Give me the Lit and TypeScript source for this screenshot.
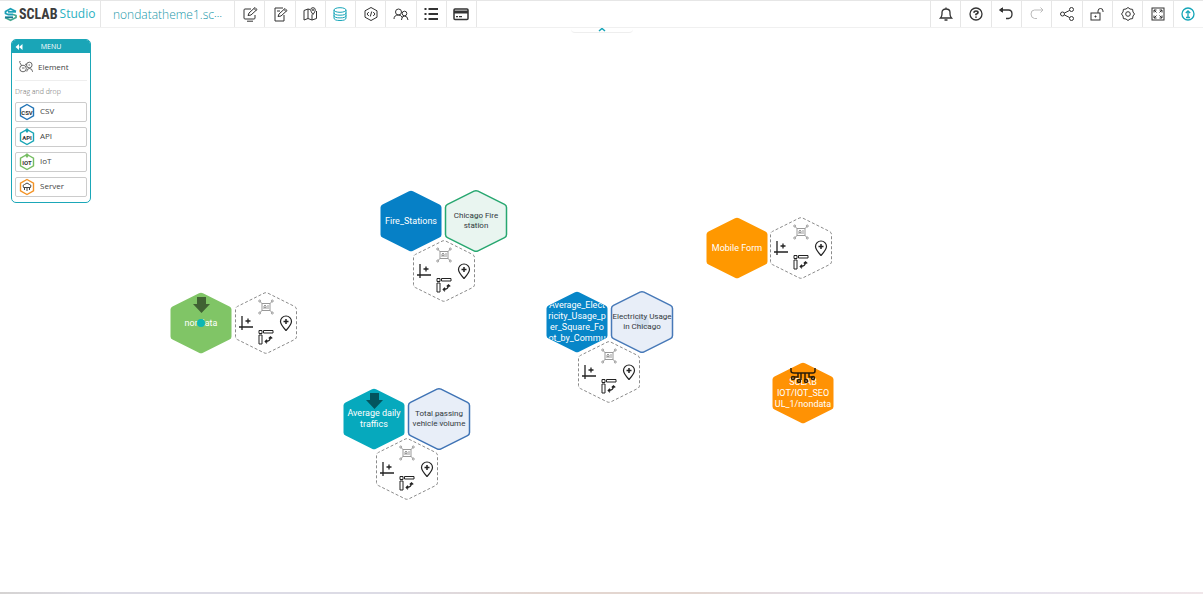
import { LitElement, html, css, svg, nothing } from "lit";
import { customElement, property } from "lit/decorators.js";

const HEX = "M34 2.2 L60.5 15.4 Q62.5 16.4 62.5 18.6 V45.4 Q62.5 47.6 60.5 48.6 L34 61.8 Q32 62.8 30 61.8 L3.5 48.6 Q1.5 47.6 1.5 45.4 V18.6 Q1.5 16.4 3.5 15.4 L30 2.2 Q32 1.2 34 2.2Z";

const ICONS: Record<string, unknown> = {
  monitorEdit: svg`<path d="M9 3H3Q2 3 2 4V12Q2 13 3 13H12Q13 13 13 12V9M5 15.2H11M6 9.5L7 7L13 1.5L15 3.5L9 9ZM12 2.5L14 4.5"/>`,
  noteEdit: svg`<path d="M11 2H3V15H12V9M6 10.5L7 8L13 2.500L15 4.500L9 10ZM12 3.500L14 5.500M5 5H8"/>`,
  map: svg`<path d="M8 3.500L6 3L2 4.500V14L6 12.500L10 14L14.500 12.500V5M6 3V12.500M10 8.500V14"/><path d="M11 8.500Q8.700 5.500 8.700 4A2.300 2.300 0 0 1 13.300 4Q13.300 5.500 11 8.500Z"/><circle cx="11" cy="4" r=".6"/>`,
  data: svg`<ellipse cx="8" cy="4" rx="6" ry="2.300"/><path d="M2 4V12Q2 14.500 8 14.500T14 12V4M2 6.700Q2 9.200 8 9.200T14 6.700M2 9.400Q2 11.900 8 11.900T14 9.400"/>`,
  code: svg`<path d="M8 1.500L14 4.800V11.200L8 14.500L2 11.200V4.800ZM5.800 6L4 8L5.800 10M10.200 6L12 8L10.200 10M8.700 5.500L7.300 10.500"/>`,
  users: svg`<circle cx="5.500" cy="6" r="3"/><path d="M1 13Q1 9 5.500 9Q8 9 9.500 11.500"/><circle cx="11.500" cy="7.500" r="2.300"/><path d="M8.500 14Q8.500 10 11.500 10T15 14"/>`,
  list: svg`<path stroke-width="2" d="M1.500 3H3.500M5.500 3H15M1.500 8H3.500M5.500 8H15M1.500 13H3.500M5.500 13H15"/>`,
  card: svg`<rect x="1" y="3" width="14" height="10.500" rx="1" stroke-width="1.500"/><path stroke-width="3" d="M1 6H15"/><path stroke-width="1.300" d="M3 10.700H5M6 10.700H9"/>`,
  bell: svg`<path stroke-width="1.300" d="M2.500 12H13.500Q12 10.500 12 8V6.500Q12 3 8 3T4 6.500V8Q4 10.500 2.500 12ZM8 1.500V3M6.500 14H9.500"/>`,
  help: svg`<circle cx="8" cy="8" r="6" stroke-width="1.300"/><path stroke-width="1.700" d="M6 6.700Q6 5 8 5T10 6.500Q10 7.500 8 8.300V9.300M8 10.400V11.800"/>`,
  undo: svg`<path stroke-width="1.300" d="M2 4H10.500Q14 4 14 8T10.500 12.500H8"/><path fill="currentColor" d="M1.500 4L4.500 1.800V6.200Z"/>`,
  redo: svg`<path d="M14 4H5.500Q2 4 2 8T5.500 12.500H8M11.500 1.500L14 4L11.500 6.500"/>`,
  share: svg`<circle cx="3.500" cy="8" r="2"/><circle cx="12.500" cy="3.500" r="2"/><circle cx="12.500" cy="12.500" r="2"/><path d="M5.300 7.100L10.700 4.400M5.300 8.900L10.700 11.600"/>`,
  lock: svg`<rect x="2" y="7" width="9" height="7"/><path d="M9 7V5Q9 2.500 11.500 2.500T14 5V6M6.500 9.500V11.500M5.500 10.500H7.500"/>`,
  gear: svg`<path d="M8 1.500L10 3L12.600 3.400L13 6L14.500 8L13 10L12.600 12.600L10 13L8 14.500L6 13L3.400 12.600L3 10L1.500 8L3 6L3.400 3.400L6 3Z"/><circle cx="8" cy="8" r="2.300"/>`,
  expand: svg`<rect x="2" y="2" width="12" height="12"/><path d="M4 6.500V4H6.500M4 4L6.500 6.500M9.500 4H12V6.500M12 4L9.500 6.500M4 9.500V12H6.500M4 12L6.500 9.500M12 9.500V12H9.500M12 12L9.500 9.500"/>`,
  upload: svg`<circle cx="8" cy="8" r="6" stroke-width="1.300"/><path stroke-width="1.300" d="M8 11V5M5.800 7L8 4.800L10.200 7M6 11.500H10"/>`,
  element: svg`<g stroke-width=".8"><circle cx="5" cy="9.500" r="3.300"/><circle cx="11.300" cy="6" r="2.800"/><path d="M8.800 12.500Q8.800 9.500 11.500 9.500T14.500 12.500V13M1.800 3.500L3.500 6.500M7 5.500L8.500 5M1 3L2.500 2.500M4 9H6.500M10.500 6H12"/></g>`,
  ai: svg`<rect x="4" y="4.500" width="8" height="7"/><path d="M4 4.500L2 2.500M12 4.500L14 2.500M4 11.500L2 13.500M12 11.500L14 13.500M6 10V7L7 6L8 7V10M6 8.500H8M10 6V10"/><circle cx="1.700" cy="2" r="1"/><circle cx="14.300" cy="2" r="1"/><circle cx="1.700" cy="14" r="1"/><circle cx="14.300" cy="14" r="1"/>`,
  axis: svg`<path stroke-width="1.300" d="M4 1V15M1 12H15M7.500 6H12.500M10 3.500V8.500"/>`,
  pin: svg`<path stroke-width="1.200" d="M8 15.500Q2.500 9.500 2.500 6.500A5.500 5.500 0 0 1 13.500 6.500Q13.500 9.500 8 15.500Z"/><path stroke-width="1.500" d="M5.500 6.500H10.500M8 4V9"/>`,
  ruler: svg`<path d="M1 1.500H4V4.500H1ZM5.500 1.500H15V4H5.500ZM1 6H4V15H1Z"/><path stroke-width="1.300" d="M7.500 12.500Q12.500 12.500 12.500 8M9 10.800L7.300 12.500L9 14.200M10.800 9.500L12.500 7.800L14.200 9.500"/>`,
};

const icon = (name: string) => html`<svg class="icon" viewBox="0 0 16 16" aria-hidden="true">${ICONS[name]}</svg>`;

interface Item { kind: "solid" | "outline" | "tools"; x: number; y: number; color?: string; fill?: string; lines?: string[]; mark?: "arrow" | "iot"; dot?: boolean }

const ITEMS: Item[] = [
  { kind: "solid", x: 411, y: 221, color: "#0680c6", lines: ["Fire_Stations"] },
  { kind: "outline", x: 476, y: 221, color: "#27a770", fill: "#e9f5f0", lines: ["Chicago Fire", "station"] },
  { kind: "tools", x: 444, y: 271 },
  { kind: "solid", x: 201, y: 323, color: "#80c566", lines: ["nondata"], mark: "arrow", dot: true },
  { kind: "tools", x: 266, y: 323 },
  { kind: "solid", x: 577, y: 322, color: "#0786c8", lines: ["Average_Elect", "ricity_Usage_p", "er_Square_Fo", "ot_by_Commu"] },
  { kind: "outline", x: 642, y: 322, color: "#4779b8", fill: "#e8eef8", lines: ["Electricity Usage", "in Chicago"] },
  { kind: "tools", x: 609, y: 372 },
  { kind: "solid", x: 374, y: 419, color: "#06a9bd", lines: ["Average daily", "traffics"], mark: "arrow" },
  { kind: "outline", x: 439, y: 419, color: "#3f73b5", fill: "#e8eef8", lines: ["Total passing", "vehicle volume"] },
  { kind: "tools", x: 407, y: 469 },
  { kind: "solid", x: 737, y: 248, color: "#ff9800", lines: ["Mobile Form"] },
  { kind: "tools", x: 801, y: 248 },
  { kind: "solid", x: 803, y: 393, color: "#ff9204", lines: ["SCLAB", "IOT/IOT_SEO", "UL_1/nondata"], mark: "iot" },
];

const shared = css`
  *, *::before { box-sizing: border-box; }
  button { font: inherit; color: inherit; border: 0; padding: 0; margin: 0; background: none; cursor: pointer; }
  .icon { display: block; width: 16px; height: 16px; fill: none; stroke: currentColor; stroke-width: 1; }
`;

@customElement("hex-node")
export class HexNode extends LitElement {
  static styles = [shared, css`
    :host { display: block; width: 64px; height: 64px; }
    .hex { position: relative; display: grid; width: 64px; height: 64px; place-items: center; }
    .shape { position: absolute; inset: 0; width: 64px; height: 64px; }
    .label { position: relative; text-align: center; white-space: nowrap; font-family: Roboto, sans-serif; }
    .clip { position: absolute; inset: 0; display: grid; place-items: center; place-content: center; clip-path: polygon(50% 2%, 97% 26%, 97% 74%, 50% 98%, 3% 74%, 3% 26%); }
    .solid { color: #fff; font-size: 9px; line-height: 11px; }
    .outline { color: #33393d; font-size: 8px; line-height: 10px; }
    .line { display: block; }
    .tools { display: grid; grid-template: 18px 14px 14px / 20px 20px 20px; place-items: center; place-content: start center; padding-top: 7px; color: #222; }
    .tools button { position: relative; }
    .ai { grid-area: 1 / 2; color: #999; }
    .axis { grid-area: 2 / 1; }
    .pin { grid-area: 2 / 3; }
    .ruler { grid-area: 3 / 2; }
  `];
  @property({ attribute: false }) item!: Item;

  render() {
    const i = this.item;
    if (i.kind === "tools") {
      return html`<div class="hex tools">
        <svg class="shape" viewBox="0 0 64 64" aria-hidden="true"><path d=${HEX} fill="#fff" stroke="#8b8b8b" stroke-dasharray="3 2"/></svg>
        <button class="ai" aria-label="AI">${icon("ai")}</button>
        <button class="axis" aria-label="Add chart">${icon("axis")}</button>
        <button class="pin" aria-label="Add place">${icon("pin")}</button>
        <button class="ruler" aria-label="Transform">${icon("ruler")}</button>
      </div>`;
    }
    const solid = i.kind === "solid";
    return html`<div class="hex">
      <svg class="shape" viewBox="0 0 64 64" aria-hidden="true">
        <path d=${HEX} fill=${solid ? i.color! : i.fill!} stroke=${solid ? "none" : i.color!} stroke-width="1.5"/>
        ${solid ? nothing : svg`<circle cx="32" cy="32" r="7" fill=${i.color!} opacity=".12"/>`}
        ${i.mark === "arrow" ? svg`<path d="M28 6H37V13H41L32.500 22L24 13H28Z" fill="#000" opacity=".5"/>` : nothing}
      </svg>
      <div class="clip"><div class="label ${i.kind}">${i.lines!.map((l) => html`<span class="line">${l}</span>`)}</div></div>
      ${i.mark === "iot" || i.dot ? html`<svg class="shape" viewBox="0 0 64 64" aria-hidden="true">
        ${i.dot ? svg`<circle cx="32" cy="32" r="4" fill="#0cb7b2"/>` : svg`<g fill="none" stroke="#2b1d08" stroke-width="1.500">
          <path d="M20 7V10Q20 12 23 12H42Q44 12 44 10V7M27 12V16H23M30 12V19M34 12V19M38 12V16H42"/>
          <circle cx="22" cy="17" r="1.500"/><circle cx="28" cy="20" r="1.500"/><circle cx="35" cy="20" r="1.500"/><circle cx="42" cy="17" r="1.500"/></g>`}
      </svg>` : nothing}
    </div>`;
  }
}

@customElement("app-root")
export class AppRoot extends LitElement {
  static styles = [shared, css`
    :host { display: flex; flex-direction: column; min-height: 100vh; background: #fff; color: #444; font-family: "Open Sans", sans-serif; }
    .bar { display: flex; height: 28px; border-top: 1px solid #e6e6e6; border-bottom: 1px solid #f0f0f0; }
    .logo { display: flex; align-items: center; gap: 2px; width: 100px; padding: 0 0 0 4px; text-decoration: none; color: #3c3c3c; }
    .mark { width: 13px; height: 15px; }
    .brand { font: 700 14px/20px "Roboto Condensed", "Open Sans Condensed", Roboto, sans-serif; }
    .studio { font-size: 12px; line-height: 20px; color: #2cb1c2; }
    .file { width: 134px; padding: 0 12px; border-left: 1px solid #e6e6e6; text-align: left; font-size: 12px; font-weight: 300; color: #1797a9; white-space: nowrap; }
    .more { font-size: 8px; }
    .group { display: grid; grid-auto-flow: column; grid-auto-columns: 1fr; }
    .left { width: 243px; border-right: 1px solid #e6e6e6; }
    .right { width: 273px; margin-left: auto; }
    .cell { display: grid; place-items: center; padding-bottom: 1px; border-left: 1px solid #e6e6e6; color: #333; }
    .active { color: #15a5b8; }
    .cell:disabled { color: #bbb; }
    .canvas { position: relative; flex: 1; overflow: hidden; }
    .toggle { position: absolute; top: -1px; left: 50%; width: 62px; height: 6px; transform: translateX(-50%); display: grid; place-items: center; background: #fff; border-bottom: 1px solid #eee; border-radius: 0 0 4px 4px; color: #15a5b8; }
    .chevron { width: 8px; height: 5px; fill: none; stroke: currentColor; stroke-width: 1.5; }
    .menu { position: absolute; left: 11px; top: 11px; width: 80px; border: 1px solid #1ba7b8; border-radius: 5px; overflow: hidden; background: #fff; }
    .head { display: grid; grid-template-columns: 14px 1fr 14px; align-items: center; width: 100%; height: 13px; background: #1aa5b7; color: #fff; font-size: 7px; line-height: 10px; text-align: center; }
    .back { width: 8px; height: 8px; margin-left: 3px; fill: currentColor; }
    .body { display: flex; flex-direction: column; padding: 0 3px 5px; }
    .element { display: flex; align-items: center; gap: 4px; height: 28px; padding-left: 3px; border-bottom: 1px solid #eee; font-size: 8px; }
    .hint { margin: 0; font-size: 7px; line-height: 21px; font-weight: 300; color: #666; }
    .sources { display: flex; flex-direction: column; gap: 5px; }
    .source { display: flex; align-items: center; gap: 5px; height: 20px; padding-left: 3px; border: 1px solid #ccc; border-radius: 2px; font-size: 8px; }
    .name { padding-bottom: 3px; }
    .badge { width: 16px; height: 18px; }
    .tag { font: 700 6px Roboto, sans-serif; fill: #333; text-anchor: middle; }
    .node { position: absolute; }
    .strip { height: 2px; background: linear-gradient(90deg, #d5d3d2, #dcdbe5 8%, #dcdbe5 32%, #e3d6d0 45%, #e3d6d0 58%, #e3dfec 70%, #e5e2ed 84%, #f0e6e9); }
  `];

  private source(name: string, color: string) {
    return html`<button class="source">
      <svg class="badge" viewBox="0 0 16 18" aria-hidden="true">
        <path d="M8 1.500L14.500 5.200V12.800L8 16.500L1.500 12.800V5.200Z" fill="none" stroke=${color} stroke-width="1.400"/>
        ${name === "Server"
          ? svg`<path d="M4.500 9.500Q3 7 5.500 6.500Q8 3.500 10.500 6.500Q13 7 11.500 9.500ZM5.500 9.500V12M8 9.500V13M10.500 9.500V12" fill="none" stroke="#444"/>`
          : svg`<text class="tag" x="8" y="11.500">${name.toUpperCase()}</text>`}
        ${name === "API" || name === "IoT" ? svg`<path d="M8 0L10 2.500L8 5L6 2.500Z" fill=${color}/>` : nothing}
      </svg><span class="name">${name}</span></button>`;
  }

  private cell(name: string, label: string) {
    return html`<button class="cell ${name === "data" || name === "upload" ? "active" : ""}" aria-label=${label} ?disabled=${name === "redo"}>${icon(name)}</button>`;
  }

  render() {
    return html`
      <header class="bar">
        <a class="logo" href="#">
          <svg class="mark" viewBox="0 0 13 15" fill="none" stroke-width="1.800" stroke-linejoin="round" aria-hidden="true">
            <path d="M12 4.500L6.500 1.700L1.500 4.500V6.500L4 7.500H9" stroke="#1b9fb5"/><path d="M4 4.800H12" stroke="#1b9fb5"/>
            <path d="M9 7.500L12 8.500V10.500L6.500 13.300L1 10.500" stroke="#45a890"/><path d="M1 10.300H9" stroke="#167b91"/>
          </svg>
          <span class="brand">SCLAB</span><span class="studio">Studio</span>
        </a>
        <button class="file">nondatatheme1.sc<span class="more">⋯</span></button>
        <nav class="group left" aria-label="Views">
          ${this.cell("monitorEdit", "Dashboard editor")}${this.cell("noteEdit", "Note editor")}${this.cell("map", "Map")}${this.cell("data", "Data")}
          ${this.cell("code", "Code")}${this.cell("users", "Users")}${this.cell("list", "List")}${this.cell("card", "Card")}
        </nav>
        <nav class="group right" aria-label="Actions">
          ${this.cell("bell", "Notifications")}${this.cell("help", "Help")}${this.cell("undo", "Undo")}${this.cell("redo", "Redo")}${this.cell("share", "Share")}
          ${this.cell("lock", "Unlock")}${this.cell("gear", "Settings")}${this.cell("expand", "Full screen")}${this.cell("upload", "Publish")}
        </nav>
      </header>
      <main class="canvas">
        <button class="toggle" aria-label="Collapse toolbar"><svg class="chevron" viewBox="0 0 8 5" aria-hidden="true"><path d="M1 4L4 1.500L7 4"/></svg></button>
        ${ITEMS.map((i) => html`<hex-node class="node" style="left:${i.x - 32}px;top:${i.y - 60}px" .item=${i}></hex-node>`)}
        <aside class="menu">
          <button class="head"><svg class="back" viewBox="0 0 8 8" aria-hidden="true"><path d="M4 1V7L.5 4ZM7.500 1V7L4 4Z"/></svg><span>MENU</span></button>
          <div class="body">
            <button class="element">${icon("element")}<span>Element</span></button>
            <p class="hint">Drag and drop</p>
            <div class="sources">
              ${this.source("CSV", "#2274b5")}${this.source("API", "#18a5b5")}${this.source("IoT", "#76bd62")}${this.source("Server", "#f39224")}
            </div>
          </div>
        </aside>
      </main>
      <footer class="strip"></footer>`;
  }
}
